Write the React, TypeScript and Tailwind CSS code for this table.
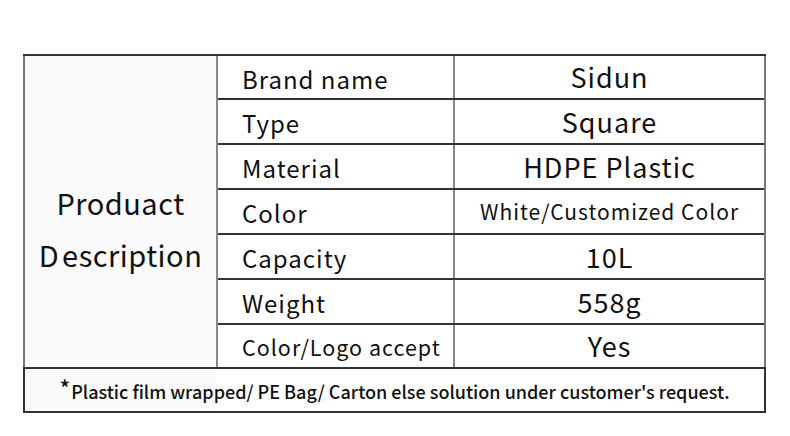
const rows = [
  { label: "Brand name", value: "Sidun", h: "h-[44px]", vs: "text-[27px]", ls: "text-[24px]" },
  { label: "Type", value: "Square", h: "h-[45px]", vs: "text-[27px]", ls: "text-[24px]" },
  { label: "Material", value: "HDPE Plastic", h: "h-[45px]", vs: "text-[27px]", ls: "text-[24px]" },
  { label: "Color", value: "White/Customized Color", h: "h-[45px]", vs: "text-[21px]", ls: "text-[24px]" },
  { label: "Capacity", value: "10L", h: "h-[45px]", vs: "text-[27px]", ls: "text-[24px]" },
  { label: "Weight", value: "558g", h: "h-[45px]", vs: "text-[27px]", ls: "text-[24px]" },
  { label: "Color/Logo accept", value: "Yes", h: "h-[42px]", vs: "text-[27px]", ls: "text-[21.5px]" },
];

export default function App() {
  return (
    <div
      className="w-[790px] h-[436px] bg-white pt-[54px] pl-[23px] text-[#111]"
      style={{ fontFamily: '"Noto Sans CJK SC", "Noto Sans", sans-serif' }}
    >
      <div className="w-[743px] border-t-2 border-[#333]">
        {/* top section */}
        <div className="flex border-l-2 border-r-2 border-[#777]">
          <div className="w-[191px] bg-[#fafafa] flex flex-col items-center justify-center pt-[32px] text-[29px] leading-[52px] tracking-[0.5px]">
            <span>Produact</span>
            <span>
              <span className="mr-[3px]">D</span>escription
            </span>
          </div>
          <div className="flex-1 border-l-2 border-[#888]">
            {rows.map((r, i) => (
              <div
                key={r.label}
                className={`flex ${r.h} ${i < rows.length - 1 ? "border-b-2 border-[#333]" : ""}`}
              >
                <div className={`w-[237px] border-r-2 border-[#888] pl-[24px] flex items-center pt-[3px] ${r.ls} tracking-[1px]`}>
                  {r.label}
                </div>
                <div className={`flex-1 flex items-center justify-center pt-[1px] ${r.vs} tracking-[1px]`}>
                  {r.value}
                </div>
              </div>
            ))}
          </div>
        </div>
        {/* footer */}
        <div className="h-[46px] border-2 border-[#333] bg-[linear-gradient(to_right,#fafafa_191px,#ffffff_191px)] flex items-center justify-center pt-[2px] text-[18px] font-medium">
          <span className="text-[22px] relative top-[-4px] mr-[1px]">*</span>
          Plastic film wrapped/ PE Bag/ Carton else solution under customer's request.
        </div>
      </div>
    </div>
  );
}
